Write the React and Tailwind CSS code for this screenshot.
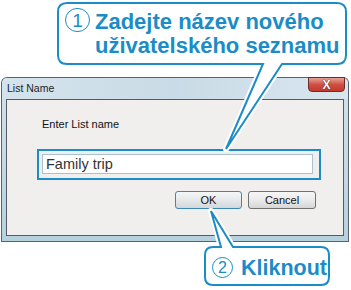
import React from "react";

const BLUE = "#1b8cc6";

function Callouts() {
  return (
    <svg
      className="absolute left-0 top-0 pointer-events-none"
      width="351"
      height="290"
      viewBox="0 0 351 290"
    >
      {/* top callout */}
      <path
        d="M67,3 H337 Q346,3 346,12 V55 Q346,64 337,64 H282 L226,149 L263,64 H67 Q58,64 58,55 V12 Q58,3 67,3 Z"
        fill="white"
        stroke="white"
        strokeWidth="6"
        strokeLinejoin="round"
      />
      <path
        d="M67,3 H337 Q346,3 346,12 V55 Q346,64 337,64 H282 L226,149 L263,64 H67 Q58,64 58,55 V12 Q58,3 67,3 Z"
        fill="white"
        stroke={BLUE}
        strokeWidth="2"
        strokeLinejoin="miter"
      />
      {/* bottom callout */}
      <path
        d="M213,247 H221 L211,211 L233,247 H321 Q329,247 329,255 V277 Q329,285 321,285 H213 Q205,285 205,277 V255 Q205,247 213,247 Z"
        fill="white"
        stroke="white"
        strokeWidth="6"
        strokeLinejoin="round"
      />
      <path
        d="M213,247 H221 L211,211 L233,247 H321 Q329,247 329,255 V277 Q329,285 321,285 H213 Q205,285 205,277 V255 Q205,247 213,247 Z"
        fill="white"
        stroke={BLUE}
        strokeWidth="2"
      />
    </svg>
  );
}

export default function App() {
  return (
    <div
      className="relative w-[351px] h-[290px] overflow-hidden bg-white"
      style={{ fontFamily: '"Liberation Sans", Arial, sans-serif' }}
    >
      <div className="pt-[77px] pl-[1px]">
        {/* window */}
        <div className="w-[348px] h-[165px] rounded-t-[6px] border border-[#56646f] border-b-[#3f6a7a] bg-gradient-to-b from-[#d3e2eb] via-[#c6d9e4] to-[#b6d1de] flex flex-col">
          {/* title bar */}
          <div className="h-[21px] flex items-start justify-between bg-gradient-to-r from-[#d5e3ec] via-[#c9dbe6] to-[#d9e6ee] rounded-t-[5px]">
            <div className="ml-[5px] mt-[4px] text-[10.5px] leading-[13px] text-[#1e1e1e]">
              List Name
            </div>
            <div className="-mt-px mr-[3px] w-[37px] h-[15px] rounded-b-[4px] border border-[#6e2a26] bg-gradient-to-b from-[#e7a298] via-[#cf4f42] to-[#c33a2f] flex items-center justify-center">
              <span
                className="text-[12px] leading-[12px] font-bold text-white"
                style={{ textShadow: "0 0 1px #5a1c18, 0 0 1px #5a1c18" }}
              >
                X
              </span>
            </div>
          </div>
          {/* panel */}
          <div className="ml-[4px] w-[338px] h-[137px] border border-[#555b66] bg-[#f0efed] flex flex-col">
            <div className="ml-[35px] mt-[18px] h-[13px] leading-[13px] text-[11px] text-[#111]">
              Enter List name
            </div>
            <div className="ml-[30px] mt-[18px] w-[284px] h-[31px] border-2 border-[#1b8cc6] pl-[3px] pt-[3px]">
              <div className="w-[271px] h-[20px] bg-white border border-[#a9c2d0] flex items-center pl-[3px]">
                <span className="text-[14.5px] leading-[16px] text-[#333]">
                  Family trip
                </span>
              </div>
            </div>
            <div className="ml-[168px] mt-[11px] flex gap-[6px]">
              <div className="w-[67px] h-[18px] rounded-[3px] border border-[#3f86b8] bg-gradient-to-b from-[#f4f6f7] via-[#e6e9eb] to-[#d2d7da] flex items-center justify-center text-[11px] text-[#111]">
                OK
              </div>
              <div className="w-[68px] h-[18px] rounded-[3px] border border-[#707070] bg-gradient-to-b from-[#f6f6f6] via-[#ebebeb] to-[#d6d6d6] flex items-center justify-center text-[11px] text-[#111]">
                Cancel
              </div>
            </div>
          </div>
        </div>
      </div>

      <Callouts />

      {/* top callout text */}
      <div className="absolute left-[65px] top-[8px] flex items-start gap-[5px] text-[#1b8cc6]">
        <div className="w-[25px] h-[24px] rounded-full border-[1.5px] border-[#1b8cc6] flex items-center justify-center text-[19px] leading-[19px]">
          1
        </div>
        <div className="mt-[2px] text-[22px] leading-[24px] font-bold whitespace-nowrap">
          <div>Zadejte název nového</div>
          <div>uživatelského seznamu</div>
        </div>
      </div>

      {/* bottom callout text */}
      <div className="absolute left-[212px] top-[257px] flex items-start gap-[8px] text-[#1b8cc6]">
        <div className="w-[21px] h-[21px] rounded-full border-[1.5px] border-[#1b8cc6] flex items-center justify-center text-[16px] leading-[16px]">
          2
        </div>
        <div className="-mt-[1px] text-[21.5px] leading-[24px] font-bold whitespace-nowrap">
          Kliknout
        </div>
      </div>
    </div>
  );
}
